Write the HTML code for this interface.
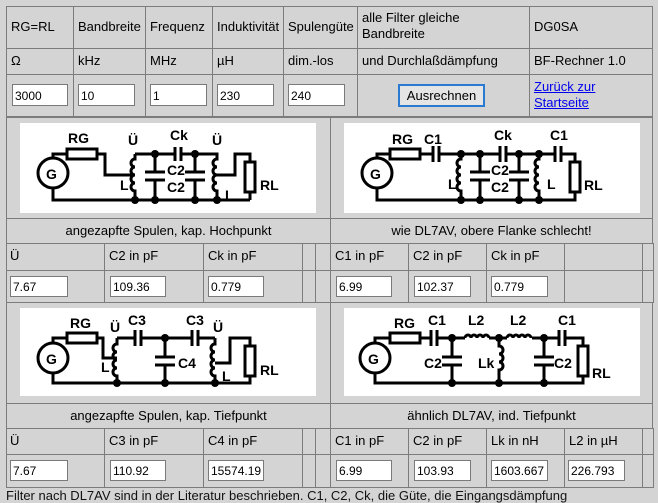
<!DOCTYPE html>
<html><head><meta charset="utf-8">
<style>
*{box-sizing:border-box;margin:0;padding:0}
body{width:658px;height:491px;background:#d4d4d4;position:relative;overflow:hidden;font-family:"Liberation Sans",Arial,sans-serif;font-size:13px;color:#000}
.c{position:absolute;border:1px solid #7c7c7c}
.t{position:absolute;white-space:nowrap;font-size:13px}
.h{font-size:13px}
.in{position:absolute;background:#fff;border:1px solid #7a7a7a;font-size:12px;padding:3px 0 0 2px;white-space:nowrap;overflow:hidden;font-family:"Liberation Sans",Arial,sans-serif}
.img{position:absolute;background:#fff}
svg text{font-family:"Liberation Sans",Arial,sans-serif;font-weight:bold;font-size:14px}
</style></head><body>
<div class="c" style="left:6px;top:6px;width:68px;height:43px"></div>
<div class="c" style="left:73px;top:6px;width:73px;height:43px"></div>
<div class="c" style="left:145px;top:6px;width:68px;height:43px"></div>
<div class="c" style="left:212px;top:6px;width:72px;height:43px"></div>
<div class="c" style="left:283px;top:6px;width:75px;height:43px"></div>
<div class="c" style="left:357px;top:6px;width:173px;height:43px"></div>
<div class="c" style="left:529px;top:6px;width:124px;height:43px"></div>
<div class="c" style="left:6px;top:48px;width:68px;height:27px"></div>
<div class="c" style="left:73px;top:48px;width:73px;height:27px"></div>
<div class="c" style="left:145px;top:48px;width:68px;height:27px"></div>
<div class="c" style="left:212px;top:48px;width:72px;height:27px"></div>
<div class="c" style="left:283px;top:48px;width:75px;height:27px"></div>
<div class="c" style="left:357px;top:48px;width:173px;height:27px"></div>
<div class="c" style="left:529px;top:48px;width:124px;height:27px"></div>
<div class="c" style="left:6px;top:74px;width:68px;height:43px"></div>
<div class="c" style="left:73px;top:74px;width:73px;height:43px"></div>
<div class="c" style="left:145px;top:74px;width:68px;height:43px"></div>
<div class="c" style="left:212px;top:74px;width:72px;height:43px"></div>
<div class="c" style="left:283px;top:74px;width:75px;height:43px"></div>
<div class="c" style="left:357px;top:74px;width:173px;height:43px"></div>
<div class="c" style="left:529px;top:74px;width:124px;height:43px"></div>

<div class="t h" style="left:11px;top:19px">RG=RL</div>
<div class="t h" style="left:78px;top:19px">Bandbreite</div>
<div class="t h" style="left:150px;top:19px">Frequenz</div>
<div class="t h" style="left:217px;top:19px">Induktivität</div>
<div class="t h" style="left:288px;top:19px">Spulengüte</div>
<div class="t h" style="left:362px;top:10px;line-height:16px">alle Filter gleiche<br>Bandbreite</div>
<div class="t h" style="left:534px;top:19px">DG0SA</div>
<div class="t h" style="left:11px;top:53px">Ω</div>
<div class="t h" style="left:78px;top:53px">kHz</div>
<div class="t h" style="left:150px;top:53px">MHz</div>
<div class="t h" style="left:217px;top:53px">µH</div>
<div class="t h" style="left:288px;top:53px">dim.-los</div>
<div class="t h" style="left:362px;top:53px">und Durchlaßdämpfung</div>
<div class="t h" style="left:534px;top:53px">BF-Rechner 1.0</div>

<div class="in" style="left:12px;top:84px;width:56px;height:22px;padding-top:4px">3000</div>
<div class="in" style="left:78px;top:84px;width:57px;height:22px;padding-top:4px">10</div>
<div class="in" style="left:150px;top:84px;width:57px;height:22px;padding-top:4px">1</div>
<div class="in" style="left:217px;top:84px;width:57px;height:22px;padding-top:4px">230</div>
<div class="in" style="left:288px;top:84px;width:57px;height:22px;padding-top:4px">240</div>
<div style="position:absolute;left:398px;top:84px;width:87px;height:23px;border:2px solid #2a7ad2;background:#e5e5e5;text-align:center;line-height:19px;font-size:13px">Ausrechnen</div>
<div class="t h" style="left:534px;top:79px;line-height:16px;color:#0000ee;text-decoration:underline">Zurück zur<br>Startseite</div>

<div class="c" style="left:6px;top:117px;width:325px;height:102px"></div>
<div class="c" style="left:330px;top:117px;width:323px;height:102px"></div>
<div class="c" style="left:6px;top:218px;width:325px;height:26px"></div>
<div class="c" style="left:330px;top:218px;width:323px;height:26px"></div>
<div class="c" style="left:6px;top:302px;width:325px;height:102px"></div>
<div class="c" style="left:330px;top:302px;width:323px;height:102px"></div>
<div class="c" style="left:6px;top:403px;width:325px;height:26px"></div>
<div class="c" style="left:330px;top:403px;width:323px;height:26px"></div>

<div id="rows"></div>

<div class="t" style="left:6px;width:325px;text-align:center;top:223px">angezapfte Spulen, kap. Hochpunkt</div>
<div class="t" style="left:330px;width:323px;text-align:center;top:223px">wie DL7AV, obere Flanke schlecht!</div>
<div class="t" style="left:6px;width:325px;text-align:center;top:408px">angezapfte Spulen, kap. Tiefpunkt</div>
<div class="t" style="left:330px;width:323px;text-align:center;top:408px">ähnlich DL7AV, ind. Tiefpunkt</div>

<div class="img" style="left:20px;top:123px;width:296px;height:90px">
<svg width="296" height="90" fill="none" stroke="#000" stroke-width="3">
<circle cx="33" cy="50" r="15"/><text x="26" y="56" fill="#000" stroke="none">G</text>
<path d="M33 35V31H47M77 31H85V52H115M33 65V77H230"/>
<rect x="47" y="26" width="30" height="10"/>
<path d="M115 31V36a3 3 0 0 0 0 8a3 3 0 0 0 0 8a3 3 0 0 0 0 8a3 3 0 0 0 0 8V77"/>
<path d="M115 31H155M161 31H197V36a3 3 0 0 0 0 8a3 3 0 0 0 0 8a3 3 0 0 0 0 8a3 3 0 0 0 0 8V77M197 52H215V31H230V39M230 69V77"/>
<path d="M155 24V38M161 24V38"/>
<path d="M135 31V49M125 49H145M125 57H145M135 57V77M175 31V49M165 49H185M165 57H185M175 57V77"/>
<rect x="225" y="39" width="10" height="30"/>
<g fill="#000" stroke="none"><circle cx="135" cy="31" r="4"/><circle cx="175" cy="31" r="4"/><circle cx="115" cy="77" r="4"/><circle cx="135" cy="77" r="4"/><circle cx="175" cy="77" r="4"/><circle cx="197" cy="77" r="4"/>
<text x="48" y="20">RG</text><text x="108" y="22">Ü</text><text x="150" y="17">Ck</text><text x="192" y="22">Ü</text><text x="100" y="67">L</text><text x="205" y="77">L</text><text x="147" y="52">C2</text><text x="147" y="69">C2</text><text x="240" y="67">RL</text></g>
</svg></div>

<div class="img" style="left:344px;top:123px;width:296px;height:90px">
<svg width="296" height="90" fill="none" stroke="#000" stroke-width="3">
<circle cx="33" cy="50" r="15"/><text x="26" y="56" fill="#000" stroke="none">G</text>
<path d="M33 35V31H46M76 31H89M95 31H156M162 31H211M217 31H231V39M231 69V77H33V65"/>
<rect x="46" y="26" width="30" height="10"/>
<path d="M89 23V39M95 23V39M156 23V39M162 23V39M211 23V39M217 23V39"/>
<path d="M117 31V36a3 3 0 0 0 0 8a3 3 0 0 0 0 8a3 3 0 0 0 0 8a3 3 0 0 0 0 8V77M195 31V36a3 3 0 0 0 0 8a3 3 0 0 0 0 8a3 3 0 0 0 0 8a3 3 0 0 0 0 8V77"/>
<path d="M136 31V49M126 49H146M126 57H146M136 57V77M175 31V49M165 49H185M165 57H185M175 57V77"/>
<rect x="226" y="39" width="10" height="30"/>
<g fill="#000" stroke="none"><circle cx="117" cy="31" r="4"/><circle cx="136" cy="31" r="4"/><circle cx="175" cy="31" r="4"/><circle cx="195" cy="31" r="4"/><circle cx="117" cy="77" r="4"/><circle cx="136" cy="77" r="4"/><circle cx="175" cy="77" r="4"/><circle cx="195" cy="77" r="4"/>
<text x="48" y="21">RG</text><text x="80" y="21">C1</text><text x="150" y="17">Ck</text><text x="206" y="17">C1</text><text x="104" y="66">L</text><text x="203" y="66">L</text><text x="147" y="52">C2</text><text x="147" y="69">C2</text><text x="240" y="67">RL</text></g>
</svg></div>

<div class="img" style="left:20px;top:308px;width:296px;height:88px">
<svg width="296" height="88" fill="none" stroke="#000" stroke-width="3">
<circle cx="33" cy="50" r="15"/><text x="26" y="56" fill="#000" stroke="none">G</text>
<path d="M33 35V30H47M77 30H83V50H97M33 65V75H230V68M230 38V30H210V55H195"/>
<rect x="47" y="25" width="30" height="10"/><rect x="225" y="38" width="10" height="30"/>
<path d="M97 30V36a3 3 0 0 0 0 8a3 3 0 0 0 0 8a3 3 0 0 0 0 8a3 3 0 0 0 0 8V75M195 30V36a3 3 0 0 0 0 8a3 3 0 0 0 0 8a3 3 0 0 0 0 8a3 3 0 0 0 0 8V75"/>
<path d="M97 30H115M121 30H172M178 30H195M115 22V38M121 22V38M172 22V38M178 22V38"/>
<path d="M145 30V49M135 49H155M135 57H155M145 57V75"/>
<g fill="#000" stroke="none"><circle cx="145" cy="30" r="4"/><circle cx="97" cy="75" r="4"/><circle cx="145" cy="75" r="4"/><circle cx="195" cy="75" r="4"/>
<text x="50" y="20">RG</text><text x="90" y="24">Ü</text><text x="108" y="17">C3</text><text x="166" y="17">C3</text><text x="193" y="24">Ü</text><text x="81" y="64">L</text><text x="202" y="73">L</text><text x="158" y="60">C4</text><text x="240" y="67">RL</text></g>
</svg></div>

<div class="img" style="left:344px;top:308px;width:296px;height:88px">
<svg width="296" height="88" fill="none" stroke="#000" stroke-width="3">
<circle cx="31" cy="50" r="15"/><text x="24" y="56" fill="#000" stroke="none">G</text>
<path d="M31 35V30H46M76 30H87M93 30H121M145 30H163M188 30H215M221 30H239V38M239 68V75H31V65"/>
<rect x="46" y="25" width="30" height="10"/><rect x="234" y="38" width="10" height="30"/>
<path d="M87 22V38M93 22V38M215 22V38M221 22V38"/>
<path d="M121 30a3 3 0 0 1 6 0a3 3 0 0 1 6 0a3 3 0 0 1 6 0a3 3 0 0 1 6 0M163 30a3 3 0 0 1 6 0a3 3 0 0 1 6 0a3 3 0 0 1 6 0a3 3 0 0 1 6 0"/>
<path d="M155 30V38a3 3 0 0 1 0 8a3 3 0 0 1 0 8a3 3 0 0 1 0 8V75"/>
<path d="M108 30V49M98 49H118M98 57H118M108 57V75M200 30V49M190 49H210M190 57H210M200 57V75"/>
<g fill="#000" stroke="none"><circle cx="108" cy="30" r="4"/><circle cx="155" cy="30" r="4"/><circle cx="200" cy="30" r="4"/><circle cx="108" cy="75" r="4"/><circle cx="155" cy="75" r="4"/><circle cx="200" cy="75" r="4"/>
<text x="50" y="20">RG</text><text x="84" y="17">C1</text><text x="124" y="17">L2</text><text x="166" y="17">L2</text><text x="214" y="17">C1</text><text x="80" y="60">C2</text><text x="134" y="60">Lk</text><text x="210" y="60">C2</text><text x="248" y="70">RL</text></g>
</svg></div>

<div class="t" style="left:6px;top:488px;color:#111">Filter nach DL7AV sind in der Literatur beschrieben. C1, C2, Ck, die Güte, die Eingangsdämpfung</div>

<script>
(function(){
var L=[[6,104],[104,203],[203,302],[302,315],[315,330]],R=[[330,408],[408,486],[486,564],[564,642],[642,653]];
var rows=[[243,270],[270,302],[428,454],[454,487]];
var h='';
rows.forEach(function(r){L.concat(R).forEach(function(c){h+='<div class="c" style="left:'+c[0]+'px;top:'+r[0]+'px;width:'+(c[1]-c[0]+1)+'px;height:'+(r[1]-r[0]+1)+'px"></div>';});});
function t(x,y,s){h+='<div class="t" style="left:'+x+'px;top:'+y+'px">'+s+'</div>';}
function i(x,y,w,s){h+='<div class="in" style="left:'+x+'px;top:'+y+'px;width:'+w+'px;height:21px">'+s+'</div>';}
t(10,248,'Ü');t(109,248,'C2 in pF');t(208,248,'Ck in pF');t(335,248,'C1 in pF');t(413,248,'C2 in pF');t(491,248,'Ck in pF');
i(10,276,58,'7.67');i(110,276,56,'109.36');i(208,276,56,'0.779');i(336,276,56,'6.99');i(414,276,57,'102.37');i(491,276,57,'0.779');
t(10,433,'Ü');t(109,433,'C3 in pF');t(208,433,'C4 in pF');t(335,433,'C1 in pF');t(413,433,'C2 in pF');t(491,433,'Lk in nH');t(569,433,'L2 in µH');
i(10,460,58,'7.67');i(110,460,56,'110.92');i(208,460,56,'15574.19');i(336,460,56,'6.99');i(414,460,57,'103.93');i(491,460,57,'1603.667');i(568,460,57,'226.793');
document.getElementById('rows').innerHTML=h;
})();
</script>
</body></html>
